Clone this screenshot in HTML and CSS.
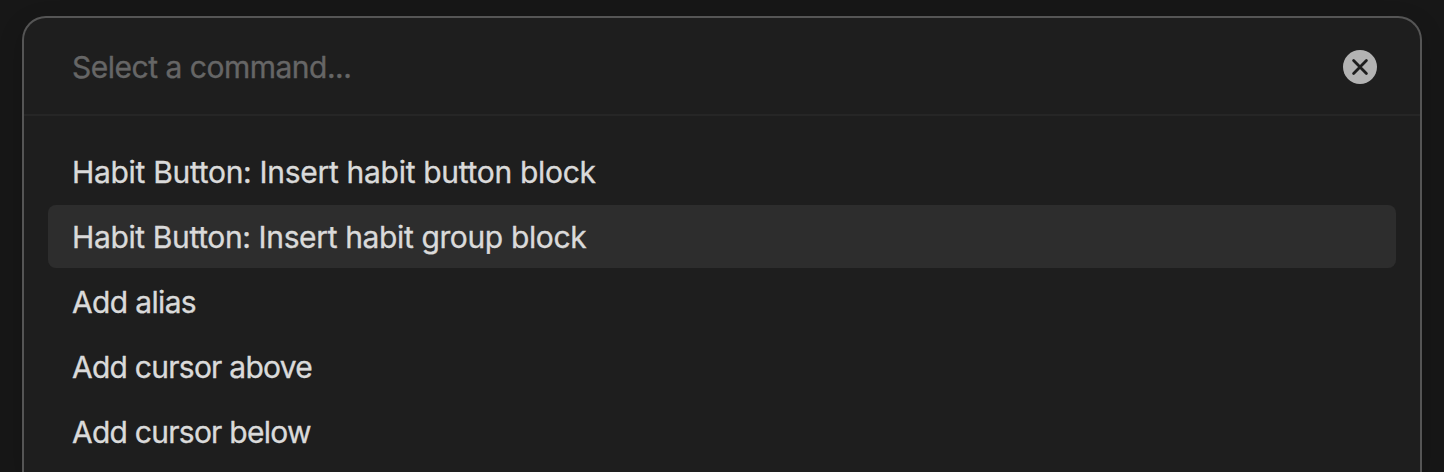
FILE: index.html
```html
<!DOCTYPE html>
<html lang="en">
<head>
<meta charset="utf-8">
<title>Command palette</title>
<link rel="stylesheet" href="styles.css">
</head>
<body>
<main class="prompt">
  <header class="prompt-header">
    <span class="placeholder">Select a command...</span>
    <svg class="clear" viewBox="0 0 34 34"><circle cx="17" cy="17" r="17"/><path d="M10.6 10.6l12.8 12.8M23.4 10.6l-12.8 12.8"/></svg>
  </header>
  <ul class="results">
    <li class="item insert-button">Habit Button: Insert habit button block</li>
    <li class="item insert-group selected">Habit Button: Insert habit group block</li>
    <li class="item alias">Add alias</li>
    <li class="item cursor">Add cursor above</li>
    <li class="item cursor">Add cursor below</li>
  </ul>
</main>
</body>
</html>
```
FILE: styles.css
```css
* { box-sizing: border-box; }
body {
  margin: 0;
  height: 472px;
  padding: 16px 22px 0;
  overflow: hidden;
  background: #171717;
  font-family: Inter, "Liberation Sans", sans-serif;
  font-size: 30px;
  -webkit-text-stroke: .35px currentColor;
}
.prompt {
  height: 456px;
  border: 2px solid #555;
  border-bottom: 0;
  border-radius: 24px 24px 0 0;
  background: #1e1e1e;
  box-shadow: 0 8px 24px rgba(0, 0, 0, .2);
}
.prompt-header {
  display: flex;
  align-items: center;
  justify-content: space-between;
  height: 98px;
  padding: 2px 43px 0 48px;
  border-bottom: 2px solid #262626;
}
.placeholder { color: #666; letter-spacing: -.49px; }
.clear { width: 34px; height: 34px; }
.clear circle { fill: #b3b3b3; }
.clear path { stroke: #1e1e1e; stroke-width: 2.8; stroke-linecap: round; }
.results {
  display: flex;
  flex-direction: column;
  gap: 2px;
  margin: 0;
  padding: 24px 24px 0;
  list-style: none;
}
.item {
  display: flex;
  align-items: center;
  height: 63px;
  padding: 1px 24px 0;
  border-radius: 8px;
  color: #dadada;
}
.selected { background: #2d2d2d; }
.insert-button { letter-spacing: -.3px; }
.insert-group { letter-spacing: -.37px; }
.alias { letter-spacing: -.66px; }
.cursor { letter-spacing: -.75px; }
```
